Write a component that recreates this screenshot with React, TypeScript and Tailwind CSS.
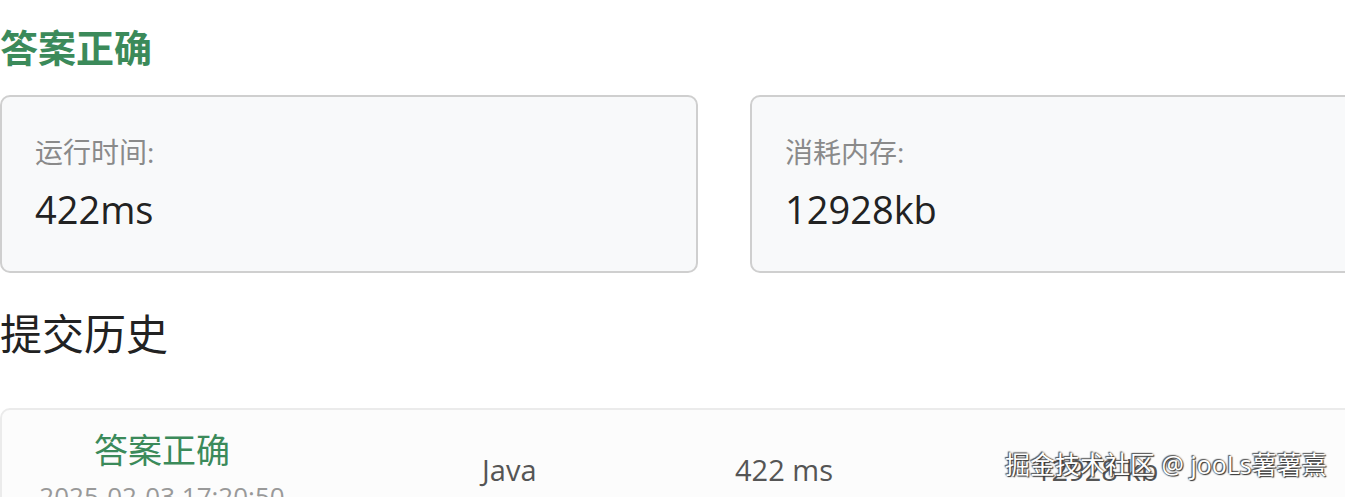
import React from "react";

const font = { fontFamily: '"Open Sans", "Noto Sans CJK SC", sans-serif' };

export default function App() {
  return (
    <div
      className="relative w-[1345px] h-[497px] overflow-hidden bg-white"
      style={font}
    >
      <div className="pt-[21px] text-[38px] font-bold leading-[52px] text-[#3b8a5a]">
        答案正确
      </div>
      <div className="mt-[22px] flex gap-[52px]">
        <div className="w-[698px] h-[178px] shrink-0 rounded-[10px] border-2 border-[#cfcfcf] bg-[#f8f9fa] pl-[33px] pt-[36px]">
          <div className="text-[28px] leading-[38px] text-[#8a8a8a]">运行时间:</div>
          <div className="mt-[14px] text-[38px] leading-[48px] text-[#222]">422ms</div>
        </div>
        <div className="w-[698px] h-[178px] shrink-0 rounded-[10px] border-2 border-[#cfcfcf] bg-[#f8f9fa] pl-[33px] pt-[36px]">
          <div className="text-[28px] leading-[38px] text-[#8a8a8a]">消耗内存:</div>
          <div className="mt-[14px] text-[38px] leading-[48px] text-[#222]">12928kb</div>
        </div>
      </div>
      <div className="mt-[33px] text-[42px] leading-[56px] text-[#222]">提交历史</div>
      <div className="mt-[46px] w-[1400px] h-[120px] rounded-[10px] border-2 border-[#ebebeb] bg-[#fcfcfc] flex items-start">
        <div className="w-[320px] shrink-0 flex flex-col items-center pt-[18px]">
          <div className="text-[34px] leading-[44px] text-[#3b8a5a]">答案正确</div>
          <div className="mt-[8px] text-[26px] leading-[32px] text-[#999] whitespace-nowrap">2025-02-03 17:20:50</div>
        </div>
        <div className="pl-[160px] pt-[41px] text-[29px] leading-[38px] text-[#555] w-[413px] shrink-0">Java</div>
        <div className="pt-[41px] text-[29px] leading-[38px] text-[#555] w-[300px] shrink-0">422 ms</div>
        <div className="pt-[41px] text-[29px] leading-[38px] text-[#555]">12928 kb</div>
      </div>
      <div
        className="absolute left-[1005px] top-[447px] text-[25px] leading-[34px] text-white whitespace-nowrap"
        style={{ textShadow: "1px 1px 1px #333, -1px -1px 1px #555, 0 0 2px #444" }}
      >
        掘金技术社区 @ jooLs薯薯熹
      </div>
    </div>
  );
}
